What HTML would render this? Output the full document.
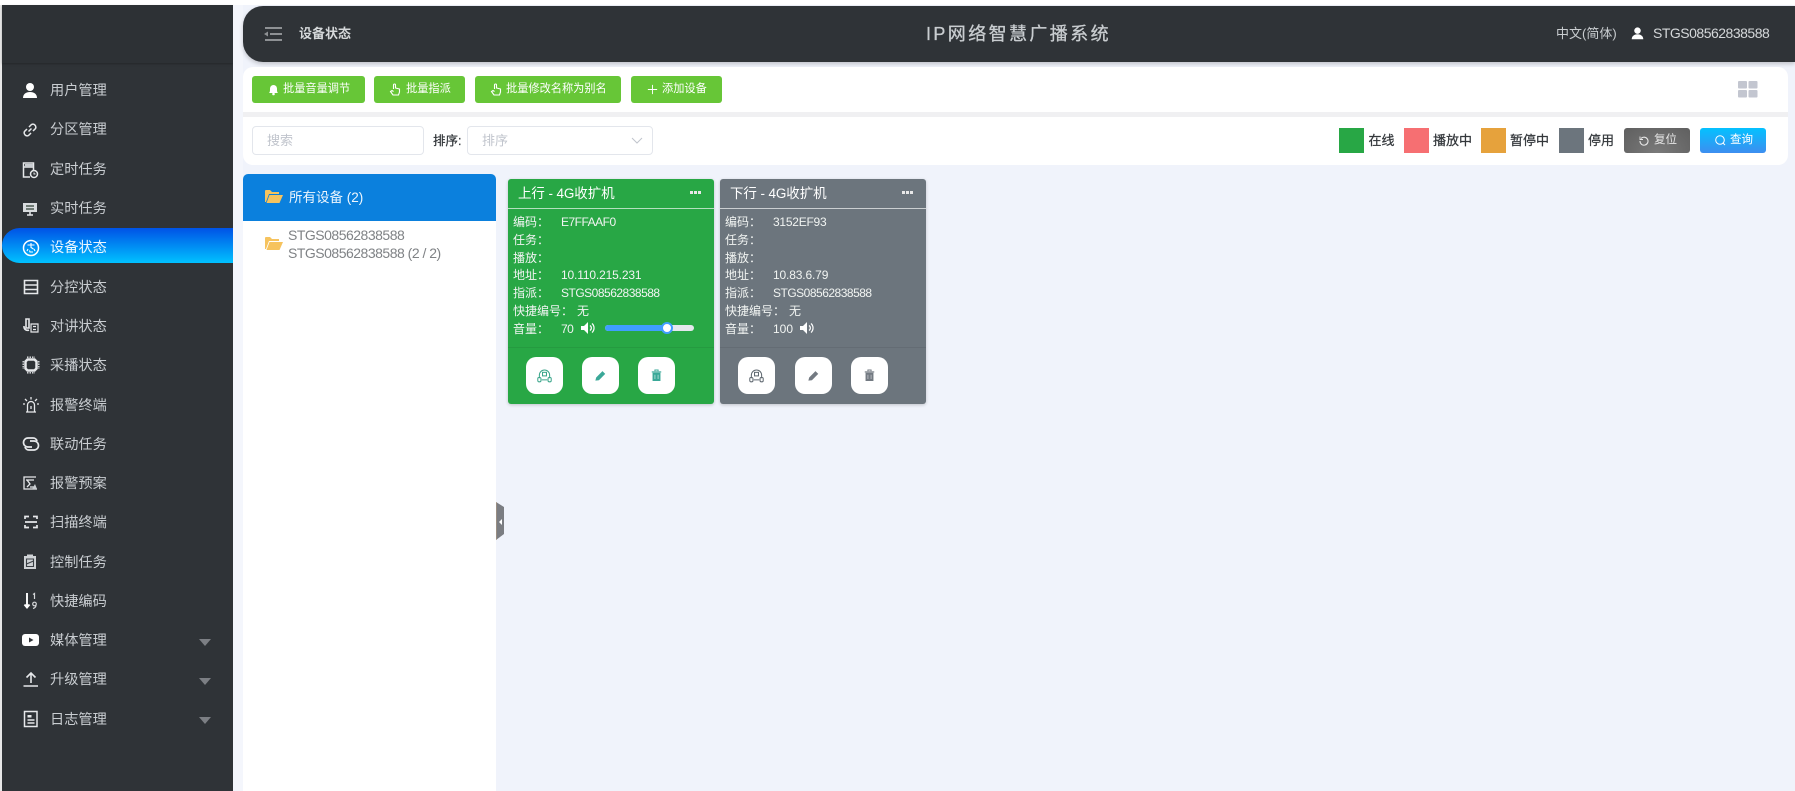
<!DOCTYPE html>
<html lang="zh"><head><meta charset="utf-8"><title>设备状态</title>
<style>
*{box-sizing:border-box;margin:0;padding:0}
html,body{width:1795px;height:791px;overflow:hidden;background:#f0f3fb;font-family:"Liberation Sans","Noto Sans CJK SC",sans-serif}
#w{position:absolute;left:0;top:0;width:1795px;height:791px;overflow:hidden;filter:blur(.35px)}
.a{position:absolute}
.t{position:absolute;white-space:nowrap}
.nav{position:absolute;left:50px;font-size:14.2px;line-height:20px;color:#c9cdd1;white-space:nowrap}
.ic{position:absolute;left:21px;width:18px;height:18px;fill:none;stroke:#e6e8ea;stroke-width:1.5}
.car{position:absolute;left:199px;width:0;height:0;border-left:6px solid transparent;border-right:6px solid transparent;border-top:7px solid #7c7f84}
.btn{position:absolute;top:76px;height:27px;background:#67c637;border-radius:3px;color:#fff;font-size:11.2px;line-height:27px;white-space:nowrap}
.btn svg{position:absolute;top:7px;width:13px;height:13px;fill:none;stroke:#fff;stroke-width:1.1}
.inp{position:absolute;top:126px;height:29px;background:#fff;border:1px solid #e3e6ec;border-radius:4px;font-size:13px;line-height:27px;color:#c0c4cc}
.sq{position:absolute;top:128px;width:25px;height:25px}
.lg{position:absolute;top:132px;font-size:13px;line-height:18px;color:#33373b;white-space:nowrap;-webkit-text-stroke:.25px #33373b}
.card{position:absolute;top:179px;width:206px;height:225px;border-radius:3px;color:#fff;box-shadow:0 1px 3px rgba(0,0,0,.2);overflow:hidden}
.card .hd{position:absolute;left:0;top:0;right:0;height:30px;border-bottom:1px solid rgba(255,255,255,.65);font-size:13.5px;line-height:29px;padding-left:10px;letter-spacing:-.1px}
.card .dots{position:absolute;right:13px;top:12px;width:11px;height:3px;background:repeating-linear-gradient(90deg,#e8e8e8 0 3px,transparent 3px 4px)}
.card .l{position:absolute;left:5px;font-size:12px;line-height:18px;white-space:nowrap;color:#f1f4f2}
.card .v{position:absolute;left:53px;font-size:12px;line-height:18px;white-space:nowrap;color:#f1f4f2;letter-spacing:-.5px}
.card .sep{position:absolute;left:0;right:0;top:168px;height:1px;background:rgba(0,0,0,.07)}
.card .b{position:absolute;top:178px;width:37px;height:37px;background:#fff;border-radius:10px}
.card .b svg{position:absolute;left:11px;top:11px;width:15px;height:15px;fill:none;stroke-width:1.3}
</style></head>
<body><div id="w">
<div class="a" style="left:0;top:0;width:1795px;height:5px;background:#fff"></div>
<div class="a" style="left:0;top:5px;width:2px;height:786px;background:#e8e8e8"></div>

<!-- sidebar -->
<div class="a" style="left:2px;top:5px;width:231px;height:786px;background:#2f3337"></div>
<div class="a" style="left:2px;top:5px;width:231px;height:58px;background:#2d3135;box-shadow:0 1px 2px rgba(0,0,0,.25)"></div>
<div class="a" style="left:233px;top:5px;width:10px;height:786px;background:#f4f6fc"></div>
<div class="a" style="left:2px;top:228px;width:231px;height:35px;border-radius:18px 0 0 18px;background:linear-gradient(180deg,#0052e6,#00c2ff)"></div>

<svg class="ic" style="top:82px" viewBox="0 0 18 18"><circle cx="9" cy="5" r="4" fill="#fff" stroke="none"/><path d="M2 16c0-4 3-6 7-6s7 2 7 6z" fill="#fff" stroke="none"/></svg>
<svg class="ic" style="top:121px" viewBox="0 0 18 18"><path d="M7.5 10.500l3-3M6 8l-2.500 2.500a3 3 0 0 0 4 4L10 12M8 6l2.500-2.500a3 3 0 0 1 4 4L12 10"/></svg>
<svg class="ic" style="top:161px" viewBox="0 0 18 18"><path d="M9 16H2.500V2h10v7M3 6h9"/><path d="M4 3h8v3H4z" fill="#c9cdd1" stroke="none"/><circle cx="13" cy="13" r="3.500"/><path d="M13 11.500V13h1.500" stroke-width="1"/></svg>
<svg class="ic" style="top:200px" viewBox="0 0 18 18"><path d="M2 3h14v9H2z" fill="#d9dcdf" stroke="none"/><path d="M5 6h8M5 9h8" stroke="#4a5a50"/><path d="M6 15h6M9 12v3"/></svg>
<svg class="ic" style="top:239px;left:22px" viewBox="0 0 18 18"><circle cx="9" cy="9" r="7.500" stroke="#fff"/><path d="M5.500 6h7M9 4v4.500l2.500 1.500M5 12l1-2M13 12l-1-2M7.500 11.500l.5 1.500h3" stroke="#fff" stroke-width="1.100"/></svg>
<svg class="ic" style="top:278px;left:22px" viewBox="0 0 18 18"><path d="M2.500 2.500h13v13h-13zM2.500 7h13M2.500 11.500h13" stroke-width="1.600"/></svg>
<svg class="ic" style="top:317px;left:22px" viewBox="0 0 18 18"><path d="M4 2h3v9H4zM2 9v1a3.500 3.500 0 0 0 5 3" stroke-width="1.600"/><path d="M9 7h7v8H9zM11 9.500h3M11 12.500h3" stroke-width="1.200"/></svg>
<svg class="ic" style="top:356px;left:22px" viewBox="0 0 18 18"><path d="M5.500 3.500h7l2 2v7l-2 2h-7l-2-2v-7z" stroke-width="2.500"/><path d="M5 1.200h8M5 16.800h8M1.200 5v8M16.800 5v8" stroke-width="1.300" stroke-dasharray="1.500 1"/></svg>
<svg class="ic" style="top:396px;left:22px" viewBox="0 0 18 18"><path d="M4 16h10M5.500 16V9a3.500 3.500 0 0 1 7 0v7M9 10v3M9 1v2.500M3 3l2 2M15 3l-2 2M1 8h2M15 8h2" stroke-width="1.300"/></svg>
<svg class="ic" style="top:435px;left:22px" viewBox="0 0 18 18"><path d="M10 12H6A4 4 0 0 1 6 3h5a4 4 0 0 1 4 3" stroke-width="1.700"/><path d="M8 6h4a4 4 0 0 1 0 9H7a4 4 0 0 1-4-3" stroke-width="1.700"/></svg>
<svg class="ic" style="top:474px" viewBox="0 0 18 18"><path d="M15 3H3v12h13M5 6l8 0M6 6l3 4-3 3M13 13H9" stroke-width="1.300"/><path d="M11 15l3-5 2 5z" fill="#c9cdd1" stroke="none"/></svg>
<svg class="ic" style="top:513px;left:22px" viewBox="0 0 18 18"><path d="M3 6V3.500h4M11 3.500h4V6M3 12v2.500h4M11 14.500h4V12M3 9h12" stroke-width="1.700"/></svg>
<svg class="ic" style="top:553px" viewBox="0 0 18 18"><path d="M3 3h12v13H3z" fill="#d0d3d6" stroke="none"/><path d="M6 1.500h6V4H6z" fill="#d0d3d6" stroke="none"/><path d="M5.500 6h7v7.500h-7zM5.500 11l7-3" stroke="#3a3f44" stroke-width="1.100"/></svg>
<svg class="ic" style="top:592px" viewBox="0 0 18 18"><path d="M6 1v14M3.500 12.500L6 15.500l2.500-3" stroke="#fff" stroke-width="1.900"/><path d="M12 2.500l1.500-1V7" stroke="#d5d7d9" stroke-width="1.200"/><circle cx="13.500" cy="12" r="1.800" stroke="#d5d7d9" stroke-width="1.200"/><path d="M15 13c0 2-1 3-3 3.500" stroke="#d5d7d9" stroke-width="1.200"/></svg>
<svg class="ic" style="top:631px;left:22px" viewBox="0 0 18 18"><rect x="0" y="3" width="17" height="12" rx="3" fill="#fff" stroke="none"/><path d="M7 6.500l4.500 2.500L7 11.500z" fill="#2f3337" stroke="none"/></svg>
<svg class="ic" style="top:670px;left:22px" viewBox="0 0 18 18"><path d="M1.500 16h14.500M9 13V3M4.500 7.500L9 3l4.500 4.500" stroke-width="1.600"/></svg>
<svg class="ic" style="top:710px;left:22px" viewBox="0 0 18 18"><path d="M2.500 1.500h12.500v15H2.500z" stroke-width="1.500"/><path d="M5.500 5h4v2.500h-4z" fill="#e6e8ea" stroke="none"/><path d="M5.500 10h7M5.500 13h7" stroke-width="1.500"/></svg>

<div class="nav" style="top:81px">用户管理</div>
<div class="nav" style="top:120px">分区管理</div>
<div class="nav" style="top:160px">定时任务</div>
<div class="nav" style="top:199px">实时任务</div>
<div class="nav" style="top:238px;color:#eaf6ff">设备状态</div>
<div class="nav" style="top:278px">分控状态</div>
<div class="nav" style="top:317px">对讲状态</div>
<div class="nav" style="top:356px">采播状态</div>
<div class="nav" style="top:396px">报警终端</div>
<div class="nav" style="top:435px">联动任务</div>
<div class="nav" style="top:474px">报警预案</div>
<div class="nav" style="top:513px">扫描终端</div>
<div class="nav" style="top:553px">控制任务</div>
<div class="nav" style="top:592px">快捷编码</div>
<div class="nav" style="top:631px">媒体管理</div>
<div class="nav" style="top:670px">升级管理</div>
<div class="nav" style="top:710px">日志管理</div>
<div class="car" style="top:639px"></div>
<div class="car" style="top:678px"></div>
<div class="car" style="top:717px"></div>

<!-- header -->
<div class="a" style="left:243px;top:5.500px;width:1552px;height:56px;background:#2f3337;border-radius:20px 0 0 20px;box-shadow:0 2px 4px rgba(0,0,0,.2)"></div>
<svg class="a" style="left:264px;top:26px;width:18px;height:16px" viewBox="0 0 18 16" fill="none"><path d="M1 2h17M6 8h12M1 14h17" stroke="#8e9194" stroke-width="2"/><path d="M0 8l4-2.500v5z" fill="#8e9194"/></svg>
<div class="t" style="left:299px;top:25px;font-size:13px;line-height:18px;font-weight:700;color:#d5d8da">设备状态</div>
<div class="t" style="left:926px;top:22px;font-size:18px;line-height:24px;letter-spacing:2.4px;color:#c9cdd0;-webkit-text-stroke:.3px #c9cdd0">IP网络智慧广播系统</div>
<div class="t" style="left:1556px;top:25px;font-size:13px;line-height:18px;color:#c9cdd0">中文(简体)</div>
<svg class="a" style="left:1631px;top:27px;width:13px;height:13px" viewBox="0 0 18 18"><circle cx="9" cy="5" r="4.500" fill="#fff"/><path d="M1 17c0-4 3-7 8-7s8 3 8 7z" fill="#fff"/></svg>
<div class="t" style="left:1653px;top:24px;font-size:14px;line-height:19px;letter-spacing:-.5px;color:#d5d8da">STGS08562838588</div>

<!-- toolbars -->
<div class="a" style="left:243px;top:67px;width:1545px;height:98px;background:#fff;border-radius:10px"></div>
<div class="a" style="left:243px;top:112px;width:1545px;height:5px;background:#f0f0f2"></div>

<div class="btn" style="left:252px;width:113px;padding-left:31px"><svg style="left:15px" viewBox="0 0 13 13"><path d="M2 10c1-1 1-2 1-4.500a3.500 3.500 0 0 1 7 0c0 2.500 0 3.500 1 4.500z" fill="#fff" stroke="none"/><circle cx="6.500" cy="11" r="1.300" fill="#fff" stroke="none"/></svg>批量音量调节</div>
<div class="btn" style="left:374px;width:91px;padding-left:32px"><svg style="left:15px" viewBox="0 0 13 13"><path d="M4.500 6V2a1 1 0 0 1 2 0v3l4 1v3l-1 3H4L1.500 8.500 3 7.500l1.500 1"/></svg>批量指派</div>
<div class="btn" style="left:475px;width:146px;padding-left:31px"><svg style="left:15px" viewBox="0 0 13 13"><path d="M4.500 6V2a1 1 0 0 1 2 0v3l4 1v3l-1 3H4L1.500 8.500 3 7.500l1.500 1"/></svg>批量修改名称为别名</div>
<div class="btn" style="left:631px;width:91px;padding-left:31px"><svg style="left:16px;width:11px;height:11px;top:8px" viewBox="0 0 13 13"><path d="M6.500 1v11M1 6.500h11"/></svg>添加设备</div>

<svg class="a" style="left:1738px;top:81px;width:20px;height:17px" viewBox="0 0 20 17"><rect x="0" y="0" width="9" height="7.500" rx="1" fill="#c3c6d0"/><rect x="10.500" y="0" width="9" height="7.500" rx="1" fill="#c3c6d0"/><rect x="0" y="9" width="9" height="7.500" rx="1" fill="#c3c6d0"/><rect x="10.500" y="9" width="9" height="7.500" rx="1" fill="#c3c6d0"/></svg>

<div class="inp" style="left:252px;width:172px;padding-left:14px">搜索</div>
<div class="t" style="left:433px;top:132px;font-size:12.500px;line-height:18px;color:#33373b;-webkit-text-stroke:.25px #33373b">排序:</div>
<div class="inp" style="left:467px;width:186px;padding-left:14px">排序<svg class="a" style="left:163px;top:10px;width:12px;height:8px" viewBox="0 0 12 8" fill="none"><path d="M1 1l5 5 5-5" stroke="#c0c4cc" stroke-width="1"/></svg></div>

<div class="sq" style="left:1339px;background:#28a745"></div><div class="lg" style="left:1368.500px">在线</div>
<div class="sq" style="left:1404px;background:#f66f72"></div><div class="lg" style="left:1433px">播放中</div>
<div class="sq" style="left:1481px;background:#e6a23c"></div><div class="lg" style="left:1510px">暂停中</div>
<div class="sq" style="left:1559px;background:#6c757d"></div><div class="lg" style="left:1588px">停用</div>

<div class="a" style="left:1624px;top:128px;width:66px;height:25px;border-radius:3px;background:radial-gradient(ellipse at 50% 100%,#7a7a7a,#5f5f5f);color:#e6e6e6;font-size:11.500px;line-height:25px;padding-left:30px">复位<svg class="a" style="left:15px;top:8px;width:10px;height:10px" viewBox="0 0 10 10" fill="none"><path d="M2 2.500a4 4 0 1 1-1 2.500" stroke="#e6e6e6" stroke-width="1.100"/><path d="M1 .5v3h3" stroke="#e6e6e6" stroke-width=".9"/></svg></div>
<div class="a" style="left:1700px;top:128px;width:66px;height:25px;border-radius:3px;background:linear-gradient(180deg,#04c1ff,#3d8ef0);color:#fff;font-size:11.500px;line-height:25px;padding-left:30px">查询<svg class="a" style="left:15px;top:7px;width:11px;height:11px" viewBox="0 0 11 11" fill="none"><circle cx="5" cy="5" r="4.300" stroke="#fff" stroke-width="1"/><path d="M8 8l2 2" stroke="#fff"/></svg></div>

<!-- tree -->
<div class="a" style="left:243px;top:174px;width:253px;height:617px;background:#fff;border-radius:5px 5px 0 0"></div>
<div class="a" style="left:243px;top:174px;width:253px;height:47px;background:#0b80dd;border-radius:5px 5px 0 0"></div>
<svg class="a" style="left:265px;top:189px;width:18px;height:14px" viewBox="0 0 18 14"><path d="M0 2a1 1 0 0 1 1-1h4l2 2h7v2H4L1 13H0z" fill="#f6c35e"/><path d="M4.500 6H18l-3.500 8H1.500z" fill="#f6c35e"/></svg>
<div class="t" style="left:289px;top:188px;font-size:13.500px;line-height:19px;color:#eef6fd">所有设备 (2)</div>
<svg class="a" style="left:265px;top:236px;width:18px;height:14px" viewBox="0 0 18 14"><path d="M0 2a1 1 0 0 1 1-1h4l2 2h7v2H4L1 13H0z" fill="#f6c35e"/><path d="M4.500 6H18l-3.500 8H1.500z" fill="#f6c35e"/></svg>
<div class="t" style="left:288px;top:226px;font-size:14px;line-height:18px;letter-spacing:-.5px;color:#7f8285">STGS08562838588<br>STGS08562838588 (2 / 2)</div>

<svg class="a" style="left:496px;top:502px;width:8px;height:38px" viewBox="0 0 8 38"><path d="M0 0l8 5v27l-8 6z" fill="#7b7d82"/><path d="M0 0v38" stroke="#b09a82" stroke-width="1.200"/><path d="M3 20l3-3v6z" fill="#fff"/></svg>

<!-- card 1 -->
<div class="card" style="left:508px;background:#28a745">
<div class="hd">上行 - 4G收扩机</div><div class="dots"></div>
<div class="l" style="top:34px">编码：</div><div class="v" style="top:34px">E7FFAAF0</div>
<div class="l" style="top:52px">任务：</div>
<div class="l" style="top:70px">播放：</div>
<div class="l" style="top:87px">地址：</div><div class="v" style="top:87px;letter-spacing:-.15px">10.110.215.231</div>
<div class="l" style="top:105px">指派：</div><div class="v" style="top:105px">STGS08562838588</div>
<div class="l" style="top:123px">快捷编号：</div><div class="v" style="top:123px;left:69px">无</div>
<div class="l" style="top:141px">音量：</div><div class="v" style="top:141px">70</div>
<svg class="a" style="left:73px;top:142px;width:15px;height:14px" viewBox="0 0 15 14" fill="none"><path d="M0 5h3l4-4v12l-4-4H0z" fill="#fff"/><path d="M9 4.500a3 3 0 0 1 0 5M11 2.500a6 6 0 0 1 0 9" stroke="#fff" stroke-width="1.200"/></svg>
<div class="a" style="left:97px;top:146px;width:89px;height:6px;background:#e4e7ed;border-radius:3px"></div>
<div class="a" style="left:97px;top:146px;width:62px;height:6px;background:#409eff;border-radius:3px"></div>
<div class="a" style="left:153px;top:143px;width:12px;height:12px;background:#fff;border:2px solid #409eff;border-radius:50%"></div>
<div class="sep"></div>
<div class="b" style="left:18px"><svg viewBox="0 0 19 19" stroke="#3aa58a"><path d="M3 13V9a6.500 6.500 0 0 1 13 0v4"/><rect x="1" y="12" width="4" height="5.500" rx="1.500"/><rect x="14" y="12" width="4" height="5.500" rx="1.500"/><rect x="7" y="5.500" width="5" height="4.500"/><path d="M6 15h7"/></svg></div>
<div class="b" style="left:74px"><svg viewBox="0 0 19 19"><path d="M3 16l1-4 8-8 3.500 3.500-8 8z" fill="#3aa898"/></svg></div>
<div class="b" style="left:130px"><svg viewBox="0 0 19 19"><path d="M4.500 6h10v10.500h-10z" fill="#3aa898"/><path d="M3.500 5h12M7.500 4V2.500h4V4" stroke="#3aa898"/><path d="M7.500 8.500v5.500M11.500 8.500v5.500" stroke="#bfe5dc" stroke-width="1"/></svg></div>
</div>

<!-- card 2 -->
<div class="card" style="left:720px;background:#6c757d">
<div class="hd">下行 - 4G收扩机</div><div class="dots"></div>
<div class="l" style="top:34px">编码：</div><div class="v" style="top:34px;letter-spacing:-.25px">3152EF93</div>
<div class="l" style="top:52px">任务：</div>
<div class="l" style="top:70px">播放：</div>
<div class="l" style="top:87px">地址：</div><div class="v" style="top:87px;letter-spacing:-.15px">10.83.6.79</div>
<div class="l" style="top:105px">指派：</div><div class="v" style="top:105px">STGS08562838588</div>
<div class="l" style="top:123px">快捷编号：</div><div class="v" style="top:123px;left:69px">无</div>
<div class="l" style="top:141px">音量：</div><div class="v" style="top:141px;letter-spacing:0">100</div>
<svg class="a" style="left:80px;top:142px;width:15px;height:14px" viewBox="0 0 15 14" fill="none"><path d="M0 5h3l4-4v12l-4-4H0z" fill="#fff"/><path d="M9 4.500a3 3 0 0 1 0 5M11 2.500a6 6 0 0 1 0 9" stroke="#fff" stroke-width="1.200"/></svg>
<div class="sep"></div>
<div class="b" style="left:18px"><svg viewBox="0 0 19 19" stroke="#5f6870"><path d="M3 13V9a6.500 6.500 0 0 1 13 0v4"/><rect x="1" y="12" width="4" height="5.500" rx="1.500"/><rect x="14" y="12" width="4" height="5.500" rx="1.500"/><rect x="7" y="5.500" width="5" height="4.500"/><path d="M6 15h7"/></svg></div>
<div class="b" style="left:75px"><svg viewBox="0 0 19 19"><path d="M3 16l1-4 8-8 3.500 3.500-8 8z" fill="#737a82"/></svg></div>
<div class="b" style="left:131px"><svg viewBox="0 0 19 19"><path d="M4.500 6h10v10.500h-10z" fill="#737a82"/><path d="M3.500 5h12M7.500 4V2.500h4V4" stroke="#737a82"/><path d="M7.500 8.500v5.500M11.500 8.500v5.500" stroke="#c5c8cc" stroke-width="1"/></svg></div>
</div>
</div></body></html>
